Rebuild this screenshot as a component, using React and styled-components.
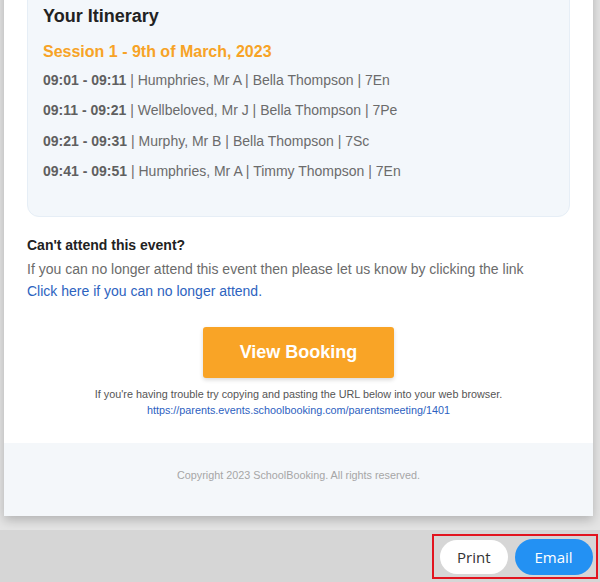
import React from 'react';
import styled, { createGlobalStyle } from 'styled-components';

const rows = [
    { time: "09:01 - 09:11", teacher: "Humphries, Mr A", pupil: "Bella Thompson", group: "7En" },
    { time: "09:11 - 09:21", teacher: "Wellbeloved, Mr J", pupil: "Bella Thompson", group: "7Pe" },
    { time: "09:21 - 09:31", teacher: "Murphy, Mr B", pupil: "Bella Thompson", group: "7Sc" },
    { time: "09:41 - 09:51", teacher: "Humphries, Mr A", pupil: "Timmy Thompson", group: "7En" },
];

const GlobalStyle = createGlobalStyle`
    html, body {
        margin: 0;
        padding: 0;
        background: #e6e6e6;
        font-family: "Liberation Sans", Arial, sans-serif;
    }
`;

function App() {
    return (
        <Page>
            <GlobalStyle />
            <Viewport>
                <Card>
                    <Body>
                        <Itinerary>
                            <h2>Your Itinerary</h2>
                            <h3>Session 1 - 9th of March, 2023</h3>
                            {rows.map((row, index) => (
                                <Row key={index}>
                                    <b>{row.time}</b> | {row.teacher} | {row.pupil} | {row.group}
                                </Row>
                            ))}
                        </Itinerary>
                        <Notice>
                            <h4>Can't attend this event?</h4>
                            <p>If you can no longer attend this event then please let us know by clicking the link</p>
                            <a href="#cancel">Click here if you can no longer attend.</a>
                        </Notice>
                        <ButtonWrap>
                            <ViewButton>View Booking</ViewButton>
                        </ButtonWrap>
                        <Trouble>
                            <p>If you're having trouble try copying and pasting the URL below into your web browser.</p>
                            <a href="#booking">https://parents.events.schoolbooking.com/parentsmeeting/1401</a>
                        </Trouble>
                    </Body>
                    <Footer>Copyright 2023 SchoolBooking. All rights reserved.</Footer>
                </Card>
            </Viewport>
            <ActionBar>
                <Highlight>
                    <Pill>Print</Pill>
                    <Pill primary>Email</Pill>
                </Highlight>
            </ActionBar>
        </Page>
    );
}

export default App;

const Page = styled.div`
    width: 600px;
    height: 582px;
    display: flex;
    flex-direction: column;
    overflow: hidden;
`;

const Viewport = styled.div`
    height: 530px;
    display: flex;
    flex-direction: column;
    justify-content: flex-end;
    overflow: hidden;
    background: #e4e4e4;
    padding: 0 7px 14px 4px;
    box-sizing: border-box;
`;

const Card = styled.div`
    background: #fff;
    box-shadow: 0 4px 10px rgba(0, 0, 0, 0.22);
    flex-shrink: 0;
`;

const Body = styled.div`
    padding: 0 23px 25px;
`;

const Itinerary = styled.div`
    background: #f3f7fb;
    border: 1px solid #e6eef6;
    border-radius: 12px;
    padding: 40px 15px 24px;

    h2 {
        margin: 0 0 15px;
        font-size: 18px;
        line-height: 22px;
        font-weight: 700;
        color: #222;
    }
    h3 {
        margin: 0 0 8px;
        font-size: 16px;
        line-height: 20px;
        font-weight: 700;
        color: #f7a326;
    }
`;

const Row = styled.p`
    margin: 0 0 10.6px;
    font-size: 14px;
    line-height: 20px;
    color: #6b6b6b;

    b {
        color: #5f5f5f;
    }
`;

const Notice = styled.div`
    padding-top: 18px;

    h4 {
        margin: 0 0 4px;
        font-size: 14px;
        line-height: 20px;
        font-weight: 700;
        color: #222;
    }
    p {
        margin: 0;
        font-size: 14px;
        line-height: 21px;
        color: #6b6b6b;
    }
    a {
        display: block;
        font-size: 14px;
        line-height: 22px;
        color: #2d63c0;
        text-decoration: none;
    }
`;

const ButtonWrap = styled.div`
    display: flex;
    justify-content: center;
    padding-top: 25px;
`;

const ViewButton = styled.button`
    width: 191px;
    height: 51px;
    border: none;
    border-radius: 3px;
    background: #f9a426;
    color: #fff;
    font-family: "Liberation Sans", Arial, sans-serif;
    font-size: 18px;
    font-weight: 700;
    box-shadow: 0 2px 4px rgba(0, 0, 0, 0.15);
    cursor: pointer;
`;

const Trouble = styled.div`
    padding-top: 8px;
    text-align: center;
    font-size: 10.8px;
    line-height: 16px;

    p {
        margin: 0;
        color: #555;
    }
    a {
        color: #2d5fbf;
        text-decoration: none;
    }
`;

const Footer = styled.div`
    height: 73px;
    box-sizing: border-box;
    padding-top: 24px;
    background: #f4f7fa;
    text-align: center;
    font-size: 10.8px;
    line-height: 16px;
    color: #a6a6a6;
`;

const ActionBar = styled.div`
    flex: 1;
    background: #d6d6d6;
    display: flex;
    justify-content: flex-end;
    align-items: center;
    padding-right: 2px;
`;

const Highlight = styled.div`
    display: flex;
    align-items: center;
    gap: 7px;
    width: 166px;
    height: 45px;
    box-sizing: border-box;
    border: 2px solid #e2141f;
    padding: 0 4px 0 6px;
    margin-top: 1px;
`;

const Pill = styled.button`
    height: ${p => (p.primary ? '36px' : '34px')};
    padding: 0 ${p => (p.primary ? '20px' : '17px')};
    border: none;
    border-radius: 18px;
    background: ${p => (p.primary ? '#2391f3' : '#fff')};
    color: ${p => (p.primary ? '#fff' : '#333')};
    font-family: "Open Sans", "Noto Sans", sans-serif;
    font-size: 15px;
    cursor: pointer;
`;
